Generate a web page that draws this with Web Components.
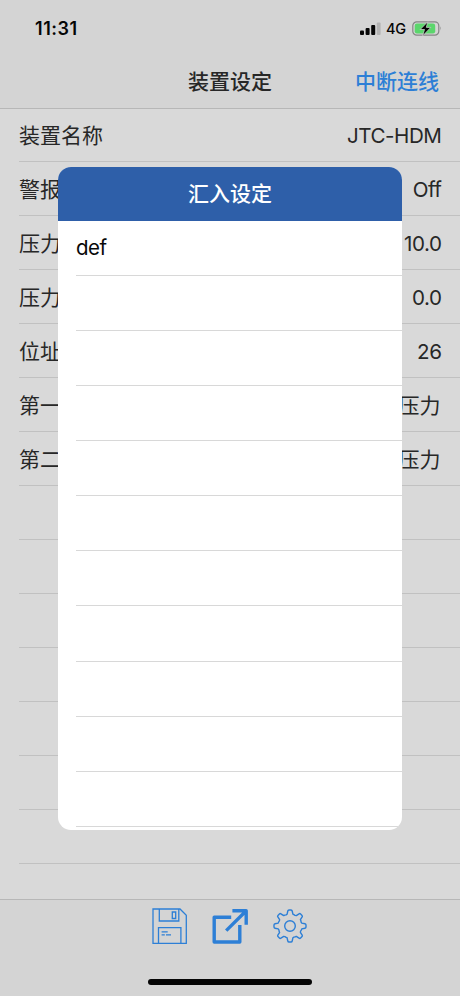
<!DOCTYPE html>
<html lang="zh-CN">
<head>
<meta charset="utf-8">
<title>装置设定</title>
<style>
html,body{margin:0;height:100%;overflow:hidden;background:#d9d9d9}
body{font-family:Inter,"Noto Sans CJK SC",sans-serif;color:#272727}
</style>
</head>
<body>
<device-settings></device-settings>
<script>
function define(name, html, setup) {
  customElements.define(name, class extends HTMLElement {
    connectedCallback() {
      if (this.shadowRoot) return;
      const root = this.attachShadow({mode: 'open'});
      const t = document.createElement('template');
      t.innerHTML = html;
      root.append(t.content.cloneNode(true));
      if (setup) setup(root, this);
    }
  });
}

define('status-bar', `<style>
:host{display:flex;height:56px;box-sizing:border-box;padding:1px 18px 0 35px;align-items:center;justify-content:space-between;color:#050505}
.time{font-size:18px;font-weight:600;letter-spacing:.55px}
.right{display:flex;align-items:center}
.net{font-size:14.5px;font-weight:500;margin:0 6px 0 5px;letter-spacing:-.2px}
svg{display:block}
</style>
<span class="time">11:31</span>
<div class="right">
<svg width="21" height="14" viewBox="0 0 21 14"><g fill="#050505"><rect x="0" y="8.5" width="4" height="4.5" rx="1"/><rect x="5.6" y="6" width="4" height="7" rx="1"/><rect x="11.2" y="3" width="4" height="10" rx="1"/></g><rect x="16.8" y=".5" width="3.8" height="12.5" rx="1" fill="#b3b3b3"/></svg>
<span class="net">4G</span>
<svg width="30" height="16" viewBox="0 0 30 16"><rect x=".8" y=".8" width="26" height="13.4" rx="4" fill="none" stroke="#858585" stroke-width="1.2"/><path d="M28.3 5.3q1.5 2.1 0 4.3z" fill="#858585"/><rect x="2.7" y="2.6" width="20.5" height="9.8" rx="2.2" fill="#5bd66c"/><path d="M15.8.7 8.2 8.5h4.3l-1.8 6.3L18.8 6.4h-4.5z" fill="#050505" stroke="#d6d6d6" stroke-width=".7"/></svg>
</div>`);

define('nav-bar', `<style>
:host{display:grid;grid-template-columns:1fr auto 1fr;align-items:center;height:52px;box-sizing:border-box;padding:0 21px 1px;font-size:21px;line-height:30px;font-weight:500}
.action{justify-self:end;color:#2d7fd6}
</style><span></span><slot></slot><span class="action"><slot name="action"></slot></span>`);

define('setting-row', `<style>
:host{display:block;height:53.95px;padding-left:19px;box-sizing:border-box}
.row{display:flex;align-items:center;justify-content:space-between;height:100%;box-sizing:border-box;border-bottom:1px solid #c1c1c1;padding:2px 19px 0 0;font-size:21px;line-height:30px;white-space:nowrap}
::slotted(.latin){font-size:20.6px;letter-spacing:-.45px;margin-right:-.5px}
::slotted(.han){margin-right:.5px}
</style><div class="row"><slot></slot><slot name="value"></slot></div>`);

define('option-row', `<style>
:host{display:block;height:55.13px;padding-left:18px;box-sizing:border-box;flex:none}
.row{display:flex;align-items:center;height:100%;box-sizing:border-box;border-bottom:1px solid #d8d8d8;font-size:20.5px;letter-spacing:-.5px;color:#080808}
</style><div class="row"><slot></slot></div>`);

define('import-dialog', `<style>
:host{display:flex;flex-direction:column;position:absolute;left:58px;top:166.5px;width:344px;height:663px;background:#fff;border-radius:13px;overflow:hidden}
header{height:54px;flex:none;display:flex;align-items:center;justify-content:center;background:#2e5fa9;color:#fff;font-size:21px;font-weight:500;line-height:30px;padding-top:1px;box-sizing:border-box}
</style><header><slot name="title"></slot></header><slot></slot>`);

define('tool-bar', `<style>
:host{display:block;height:97px;box-sizing:border-box;border-top:1px solid #b7b7b7;background:#d4d4d4}
.icons{display:flex;gap:24px;justify-content:center;height:54px;padding-top:8px;box-sizing:border-box}
svg{display:block;width:36px;height:36px;fill:none;stroke:#2d7fd6}
.home{width:164px;height:6px;border-radius:3px;background:#050505;margin:25px auto 0}
</style>
<div class="icons">
<svg viewBox="0 0 36 36" stroke-width="1.3"><path d="M1 1h27l6.3 6.3V35.3H1zM7.3 1v12h19.5V1M20.3 4h3.4v6.5h-3.4zM6.5 35V19.7h22.4V35M9.6 23.8h6.1M9.6 26.8h3.2M14 26.8h5"/></svg>
<svg viewBox="0 0 36 36" stroke-width="3.4" stroke-linejoin="round"><path d="M19.2 9.2H2.2V34h25.6V17"/><path d="M20.4 2.7h13.8v14M34 3 14.2 22.6"/></svg>
<svg viewBox="0 0 36 36" stroke-width="1.4" stroke-linejoin="round"><path class="gear"/><circle cx="18" cy="18" r="5.3"/></svg>
</div><div class="home"></div>`, root => {
  let d = '';
  for (let i = 0; i < 8; i++) {
    const a = i * Math.PI / 4, c = Math.cos(a), s = Math.sin(a);
    const p = (x, y) => (18 + x*c - y*s).toFixed(2) + ' ' + (18 + x*s + y*c).toFixed(2);
    d += (i ? 'L' : 'M') + p(-2.9,-11.8) + 'L' + p(-2.2,-15) + 'Q' + p(-2,-16) + ' ' + p(-1,-16)
      + 'L' + p(1,-16) + 'Q' + p(2,-16) + ' ' + p(2.2,-15) + 'L' + p(2.9,-11.8)
      + 'Q' + p(4,-11.6) + ' ' + p(5.1,-10.6);
  }
  root.querySelector('.gear').setAttribute('d', d + 'Z');
});

define('device-settings', `<style>
:host{display:flex;flex-direction:column;position:relative;width:460px;height:996px;overflow:hidden;background:#d9d9d9}
.top{height:108.5px;box-sizing:border-box;border-bottom:1px solid #b7b7b7;background:#d4d4d4;flex:none}
main{flex:1;min-height:0;overflow:hidden}
tool-bar{flex:none}
</style>
<div class="top"><status-bar></status-bar><nav-bar>装置设定<span slot="action">中断连线</span></nav-bar></div>
<main></main>
<tool-bar></tool-bar>
<import-dialog><span slot="title">汇入设定</span></import-dialog>`, root => {
  const add = (parent, tag, label, value) => {
    const row = document.createElement(tag);
    row.textContent = label || '';
    if (value) {
      const v = document.createElement('span');
      v.slot = 'value';
      v.textContent = value;
      v.className = /[\u4e00-\u9fff]/.test(value) ? 'han' : 'latin';
      row.append(v);
    }
    parent.append(row);
  };
  const rows = [['装置名称','JTC-HDM'],['警报','Off'],['压力','10.0'],['压力','0.0'],['位址','26'],['第一','压力'],['第二','压力']];
  for (let i = 0; i < 14; i++) add(root.querySelector('main'), 'setting-row', ...(rows[i] || []));
  for (let i = 0; i < 11; i++) add(root.querySelector('import-dialog'), 'option-row', i ? '' : 'def');
});
</script>
</body>
</html>
